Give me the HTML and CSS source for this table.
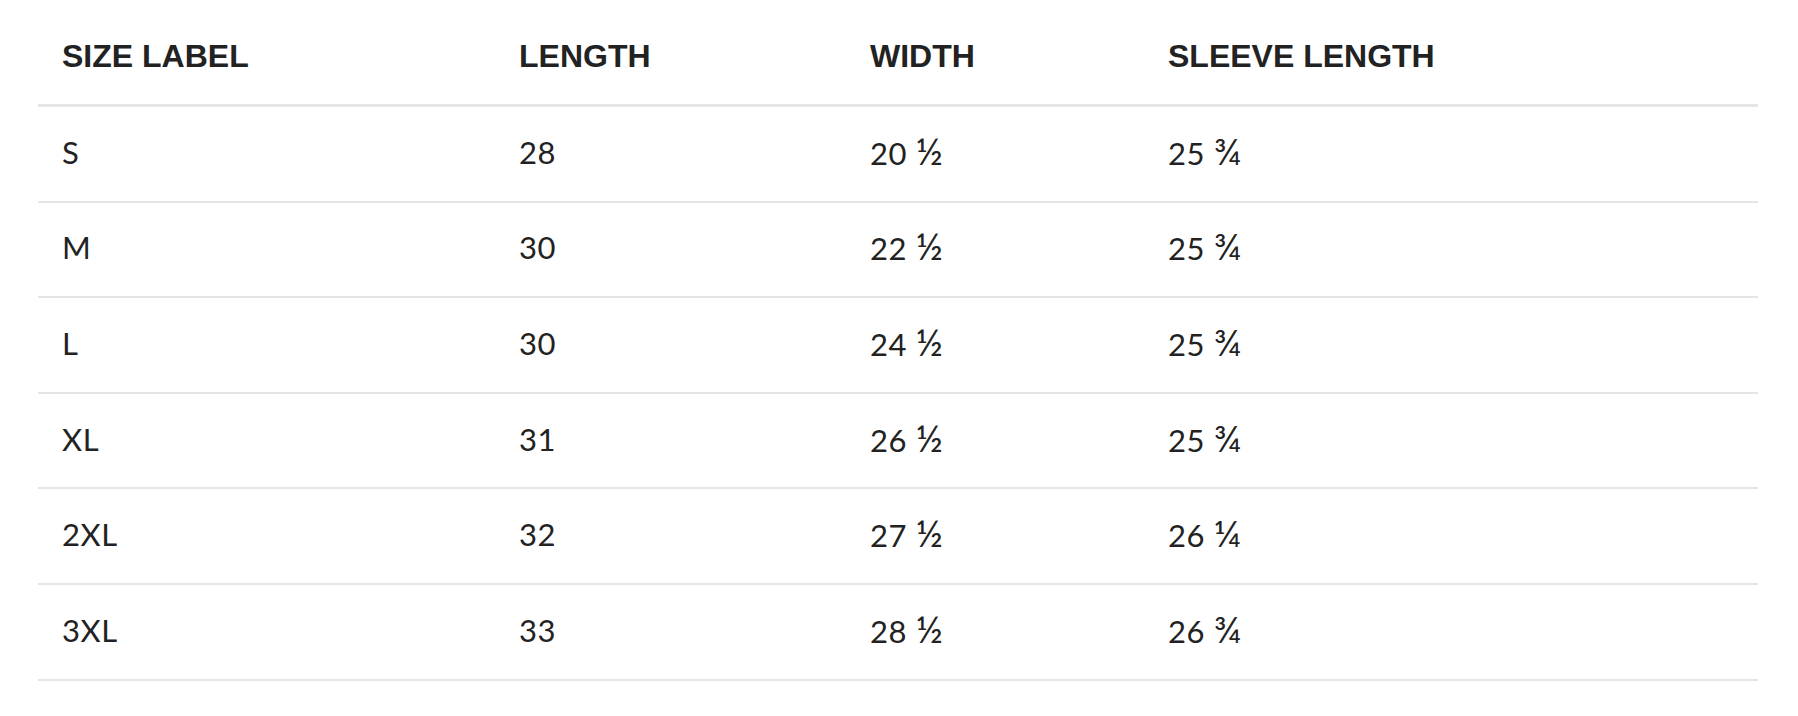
FILE: index.html
```html
<!DOCTYPE html>
<html>
<head>
<meta charset="utf-8">
<link rel="stylesheet" href="styles.css">
</head>
<body>
<div class="wrap">
<table class="sizes">
<colgroup>
<col class="c1"><col class="c2"><col class="c3"><col class="c4">
</colgroup>
<thead>
<tr><th>SIZE LABEL</th><th>LENGTH</th><th>WIDTH</th><th>SLEEVE LENGTH</th></tr>
</thead>
<tbody>
<tr><td>S</td><td>28</td><td>20 <span class="frac">½</span></td><td>25 <span class="frac">¾</span></td></tr>
<tr><td>M</td><td>30</td><td>22 <span class="frac">½</span></td><td>25 <span class="frac">¾</span></td></tr>
<tr><td>L</td><td>30</td><td>24 <span class="frac">½</span></td><td>25 <span class="frac">¾</span></td></tr>
<tr><td>XL</td><td>31</td><td>26 <span class="frac">½</span></td><td>25 <span class="frac">¾</span></td></tr>
<tr><td>2XL</td><td>32</td><td>27 <span class="frac">½</span></td><td>26 <span class="frac">¼</span></td></tr>
<tr><td>3XL</td><td>33</td><td>28 <span class="frac">½</span></td><td>26 <span class="frac">¾</span></td></tr>
</tbody>
</table>
</div>
</body>
</html>
```
FILE: styles.css
```css
html, body {
  margin: 0;
  background: #ffffff;
}
.wrap {
  padding: 8px 40px 0 38px;
}
.sizes {
  width: 1720px;
  border-collapse: collapse;
  table-layout: fixed;
}
.c1 { width: 457px; }
.c2 { width: 351px; }
.c3 { width: 298px; }
.c4 { width: auto; }
.sizes th {
  font-family: "Liberation Sans", Arial, sans-serif;
  font-weight: bold;
  font-size: 32px;
  color: #222222;
  text-align: left;
  padding: 0 24px;
  height: 96px;
  vertical-align: middle;
  border-bottom: 3px solid #e5e5e5;
}
.sizes td {
  font-family: Lato, "Open Sans", sans-serif;
  font-size: 31px;
  letter-spacing: 0.6px;
  color: #222222;
  text-align: left;
  padding: 0 24px 4px 24px;
  height: 89.6px;
  vertical-align: middle;
  border-bottom: 2px solid #e5e5e5;
}
.frac {
  font-size: 1.2em;
  line-height: 1;
}
```
